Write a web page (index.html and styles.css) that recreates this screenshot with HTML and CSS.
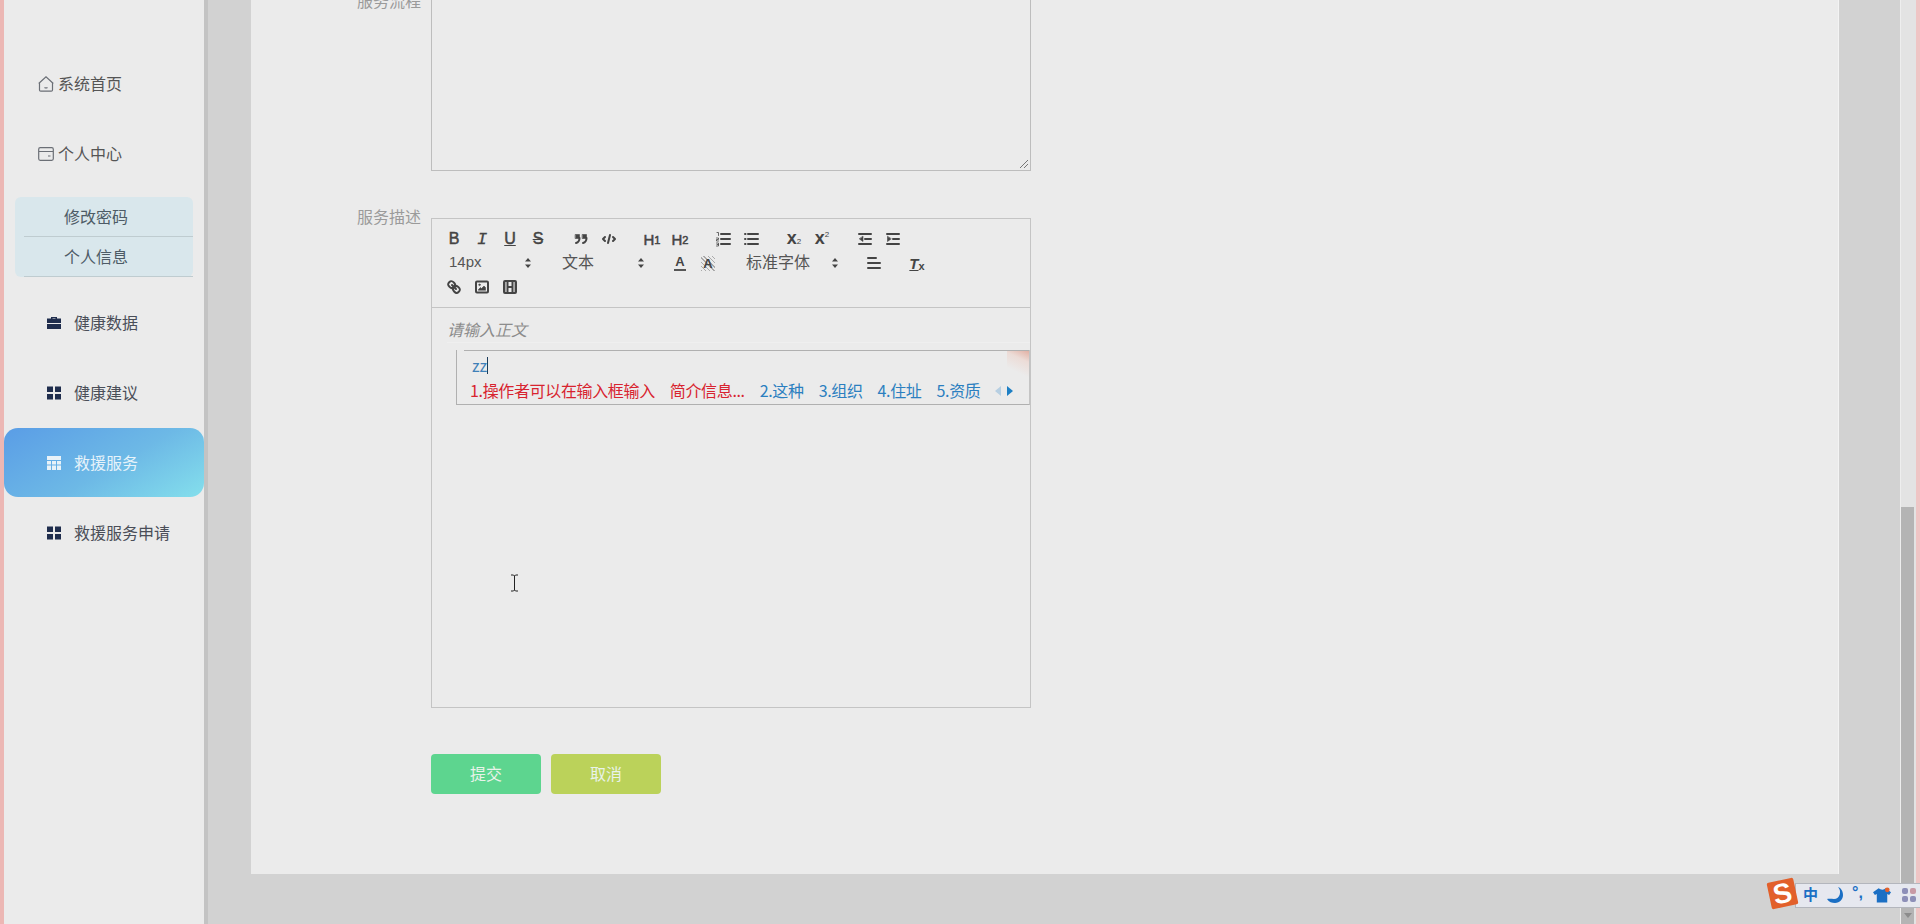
FILE: index.html
```html
<!DOCTYPE html>
<html lang="zh">
<head>
<meta charset="utf-8">
<title>救援服务</title>
<link rel="stylesheet" href="styles.css">
</head>
<body>
<div class="app">
  <div class="edge"></div>
  <aside class="sidebar">
    <a class="top-item">
      <svg class="top-icon" viewBox="0 0 16 16"><path d="M0.700 7.500 8 0.800l7.300 6.700M1.500 7v7a1.200 1.200 0 0 0 1.200 1.200h10.600a1.200 1.200 0 0 0 1.200-1.200V7"/><path d="M6.500 11.500q1.500 1 3 0"/></svg>
      <span>系统首页</span>
    </a>
    <a class="top-item">
      <svg class="top-icon" viewBox="0 0 16 16"><rect x="0.700" y="1.700" width="14.600" height="12.600" rx="1.500"/><path d="M1 5.500h14M10 10h2.500"/></svg>
      <span>个人中心</span>
    </a>
    <ul class="submenu">
      <li>修改密码</li>
      <li>个人信息</li>
    </ul>
    <a class="nav-item">
      <svg class="nav-icon" viewBox="0 0 14 14"><path d="M4 2.500V1h6v1.500h4V7H0V2.500Zm1.500 0h3V2h-3ZM0 8h14v5H0Z"/></svg>
      <span>健康数据</span>
    </a>
    <a class="nav-item">
      <svg class="nav-icon" viewBox="0 0 14 14"><rect width="6" height="5.500" y="0.500"/><rect x="8" width="6" height="5.500" y="0.500"/><rect y="8" width="6" height="5.500"/><rect x="8" y="8" width="6" height="5.500"/></svg>
      <span>健康建议</span>
    </a>
    <a class="nav-item nav-active">
      <svg class="nav-icon" viewBox="0 0 14 14"><path d="M0 0h14v4H0ZM0 5h4v3.500H0ZM5 5h4v3.500H5ZM10 5h4v3.500h-4ZM0 9.500h4V14H0ZM5 9.500h4V14H5ZM10 9.500h4V14h-4Z"/></svg>
      <span>救援服务</span>
    </a>
    <a class="nav-item">
      <svg class="nav-icon" viewBox="0 0 14 14"><rect width="6" height="5.500" y="0.500"/><rect x="8" width="6" height="5.500" y="0.500"/><rect y="8" width="6" height="5.500"/><rect x="8" y="8" width="6" height="5.500"/></svg>
      <span>救援服务申请</span>
    </a>
  </aside>
  <div class="sidebar-shade"></div>
  <main class="main">
    <div class="card">
      <div class="form">
        <div class="row row-first">
          <label class="label">服务流程</label>
          <div class="textarea">
            <svg class="grip" viewBox="0 0 10 10"><path d="M1 9 9 1M5 9l4-4"/></svg>
          </div>
        </div>
        <div class="row row-editor">
          <label class="label">服务描述</label>
          <div class="editor">
            <div class="toolbar">
              <div class="group">
                <button class="tool t-b">B</button>
                <button class="tool t-i">I</button>
                <button class="tool t-u">U</button>
                <button class="tool t-s">S</button>
              </div>
              <div class="group">
                <button class="tool"><svg class="ico" viewBox="0 0 18 18"><path class="solid" d="M3.500 4.500h4v4h-4ZM10.500 4.500h4v4h-4Z"/><path d="M7.500 8c0 4-3.500 5-3.500 5M14.500 8c0 4-3.500 5-3.500 5"/></svg></button>
                <button class="tool"><svg class="ico" viewBox="0 0 18 18"><path d="M5 7 3 9l2 2M13 7l2 2-2 2M10 5l-2 8"/></svg></button>
              </div>
              <div class="group">
                <button class="tool t-h">H<small>1</small></button>
                <button class="tool t-h">H<small>2</small></button>
              </div>
              <div class="group">
                <button class="tool"><svg class="ico" viewBox="0 0 18 18"><path d="M7 4h9M7 9h9M7 14h9"/><path class="thin" d="M3 2.500h1.500v3M2.500 8h2v1.500h-2V11h2M2.500 13h2v3h-2M3 14.500h1.500"/></svg></button>
                <button class="tool"><svg class="ico" viewBox="0 0 18 18"><path d="M6 4h10M6 9h10M6 14h10M3 4h.5M3 9h.5M3 14h.5"/></svg></button>
              </div>
              <div class="group">
                <button class="tool t-x">x<sub>2</sub></button>
                <button class="tool t-x">x<sup>2</sup></button>
              </div>
              <div class="group">
                <button class="tool"><svg class="ico" viewBox="0 0 18 18"><path d="M3 4h12M9 9h6M3 14h12"/><path class="solid" d="M7 6.500v5L3.500 9Z"/></svg></button>
                <button class="tool"><svg class="ico" viewBox="0 0 18 18"><path d="M3 4h12M9 9h6M3 14h12"/><path class="solid" d="M3.500 6.500v5L7 9Z"/></svg></button>
              </div>
              <div class="group">
                <div class="picker picker-md picker-size"><span>14px</span><svg class="updown" viewBox="0 0 8 12"><path d="M1 4.500 4 1l3 3.500ZM1 7.500 4 11l3-3.500Z"/></svg></div>
              </div>
              <div class="group">
                <div class="picker picker-md"><span>文本</span><svg class="updown" viewBox="0 0 8 12"><path d="M1 4.500 4 1l3 3.500ZM1 7.500 4 11l3-3.500Z"/></svg></div>
              </div>
              <div class="group">
                <button class="tool t-a"><span class="a-color">A</span></button>
                <button class="tool t-a"><span class="a-bg">A</span></button>
              </div>
              <div class="group">
                <div class="picker picker-lg"><span>标准字体</span><svg class="updown" viewBox="0 0 8 12"><path d="M1 4.500 4 1l3 3.500ZM1 7.500 4 11l3-3.500Z"/></svg></div>
              </div>
              <div class="group">
                <button class="tool"><svg class="ico" viewBox="0 0 18 18"><path d="M3 4h8M3 9h12M3 14h12"/></svg></button>
              </div>
              <div class="group">
                <button class="tool t-clean"><i>T</i><b>x</b></button>
              </div>
              <div class="group">
                <button class="tool"><svg class="ico" viewBox="0 0 18 18"><path d="M7 7l4 4"/><path d="M8.900 4.577a3.476 3.476 0 0 1 .36 4.679A3.476 3.476 0 0 1 4.577 8.900C3.185 7.500 2.035 6.400 4.217 4.217S7.500 3.185 8.900 4.577Z"/><path d="M13.423 9.100a3.476 3.476 0 0 0-4.679-.36 3.476 3.476 0 0 0 .36 4.679c1.392 1.392 2.500 2.542 4.679.36S14.815 10.500 13.423 9.100Z"/></svg></button>
                <button class="tool"><svg class="ico" viewBox="0 0 18 18"><rect x="3" y="3.500" width="12" height="11" rx="1"/><circle class="solid" cx="6.500" cy="6.800" r="0.800"/><path class="solid" d="M5.500 12v-.5l2-2 1 1 2.500-2.500 1.500 1.500V12Z"/></svg></button>
                <button class="tool"><svg class="ico ico-video" viewBox="0 0 18 18"><rect x="3" y="3" width="12" height="12" rx="1"/><path d="M6.500 3v12M11.500 3v12M6.500 9h5"/><path class="thin" d="M4 3v12M14 3v12"/></svg></button>
              </div>
            </div>
            <div class="editor-body">
              <p class="placeholder">请输入正文</p>
            </div>
          </div>
        </div>
        <div class="actions">
          <button class="btn btn-submit">提交</button>
          <button class="btn btn-cancel">取消</button>
        </div>
      </div>
    </div>
    <div class="main-foot"></div>
  </main>
  <div class="scrollbar"><div class="thumb"></div></div>
  <div class="edge edge-right"></div>
</div>

<div class="ime">
  <div class="ime-deco"></div>
  <div class="ime-input"><span>zz</span><i class="caret"></i></div>
  <div class="ime-list">
    <span class="cand cand-red">1.操作者可以在输入框输入</span>
    <span class="cand cand-red">简介信息...</span>
    <span class="cand">2.这种</span>
    <span class="cand">3.组织</span>
    <span class="cand">4.住址</span>
    <span class="cand">5.资质</span>
    <span class="ime-arrows"><i class="arrow-left"></i><i class="arrow-right"></i></span>
  </div>
</div>

<svg class="ibeam" viewBox="0 0 9 18"><path d="M1 1h2.500L4.500 2l1-1H8M1 17h2.500l1-1 1 1H8M4.500 2v14"/></svg>

<div class="tray">
  <div class="tray-bar">
    <span class="tray-zh">中</span>
    <svg class="tray-moon" viewBox="0 0 16 16"><path d="M11 0c4 4 2 12-4 12-2 0-5-.5-7 0 2 3 5 4 8 4 5 0 8-4 8-8 0-4-2-7-5-8Z"/></svg>
    <span class="tray-punct">°,</span>
    <svg class="tray-shirt" viewBox="0 0 20 16"><path d="M6 1 0 5l2 3 2-1v9h11V7l2 1 2-3-6-4c-1 2-5 2-7 0Z"/><circle cx="15" cy="2.500" r="2.500"/></svg>
    <div class="tray-grid"><i></i><i></i><i></i><i></i></div>
  </div>
  <div class="tray-logo"><span>S</span></div>
  <div class="tray-tri"></div>
</div>
</body>
</html>
```

FILE: styles.css
```css
* { box-sizing: border-box; }
html, body { margin: 0; height: 100%; overflow: hidden; }
body {
  font-family: "Noto Sans CJK SC", "Liberation Sans", sans-serif;
  font-size: 16px;
  background: #d2d2d2;
  color: #444;
}
a { color: inherit; text-decoration: none; }
button { font-family: inherit; border: 0; padding: 0; background: none; }

.app { display: flex; height: 924px; }
.edge { width: 4px; background: #ecb7b4; flex: none; }
.edge-right { background: #efc4c4; }

/* sidebar */
.sidebar {
  width: 200px;
  flex: none;
  background: #ebebeb;
  padding-top: 49px;
}
.sidebar-shade { width: 4px; flex: none; background: #c3c3c3; }
.top-item {
  display: flex;
  align-items: center;
  height: 70px;
  padding-left: 34px;
  gap: 4px;
  color: #555;
  line-height: 24px;
}
.top-item span { margin-top: -3px; }
.nav-item span { margin-top: -2px; }
.top-icon {
  width: 16px;
  height: 16px;
  fill: none;
  stroke: #6b6f76;
  stroke-width: 1.200;
}
.submenu {
  list-style: none;
  margin: 8px 0 11px 11px;
  padding: 0;
  width: 178px;
  height: 80px;
  background: #d9e7ec;
  border-radius: 6px;
  color: #4d5b66;
}
.submenu li {
  height: 40px;
  line-height: 38px;
  margin-left: 9px;
  padding-left: 40px;
  border-bottom: 1px solid #bfccd0;
}
.nav-item {
  display: flex;
  align-items: center;
  height: 70px;
  padding-left: 43px;
  gap: 13px;
  color: #4a4e58;
}
.nav-icon { width: 14px; height: 14px; fill: #1f2d4d; flex: none; }
.nav-active {
  color: #e6f3fa;
  border-radius: 14px;
  height: 69px;
  margin-bottom: 1px;
  background: linear-gradient(150deg, #5a9de6 0%, #6db9e6 55%, #84dfec 100%);
}
.nav-active .nav-icon { fill: #e8f2f8; }

/* main */
.main {
  flex: 1;
  min-width: 0;
  display: flex;
  flex-direction: column;
  padding-left: 43px;
  padding-right: 61px;
  overflow: hidden;
}
.card {
  height: 874px;
  background: #ebebeb;
  border-right: 1px solid #f3f3f3;
  flex: none;
}
.form { padding-left: 106px; }
.row { display: flex; }
.label {
  width: 64px;
  margin-right: 10px;
  color: #9a9a9a;
  line-height: 24px;
  text-align: right;
  flex: none;
  white-space: nowrap;
}
.row-first { margin-top: -12px; height: 183px; }
.textarea {
  position: relative;
  width: 600px;
  height: 183px;
  border: 1px solid #bdbdbd;
  border-top: 0;
}
.grip {
  position: absolute;
  right: 1px;
  bottom: 1px;
  width: 10px;
  height: 10px;
  fill: none;
  stroke: #777;
  stroke-width: 1;
}
.row-editor { margin-top: 47px; }
.row-editor .label { margin-top: -14px; }
.editor {
  width: 600px;
  height: 490px;
  border: 1px solid #c4c4c4;
  display: flex;
  flex-direction: column;
}
.toolbar {
  display: flex;
  flex-wrap: wrap;
  align-content: flex-start;
  padding: 8px 8px;
  height: 89px;
  border-bottom: 1px solid #c4c4c4;
}
.group { display: flex; margin-right: 15px; height: 24px; }
.tool {
  width: 28px;
  height: 24px;
  display: flex;
  align-items: center;
  justify-content: center;
  color: #444;
  font-family: "Liberation Sans", sans-serif;
  line-height: 1;
}
.ico {
  width: 18px;
  height: 18px;
  fill: none;
  stroke: #444;
  stroke-width: 2;
  stroke-linecap: round;
  stroke-linejoin: round;
}
.ico .solid { fill: #444; stroke-width: 0.600; }
.ico .thin { stroke-width: 0.800; }
.ico-video { stroke-linecap: butt; }
.t-b, .t-u, .t-s { font-size: 16px; -webkit-text-stroke: 0.500px #444; }
.t-u { text-decoration: underline; }
.t-s { text-decoration: line-through; }
.t-i { font-family: "Liberation Mono", monospace; font-size: 17px; font-style: italic; -webkit-text-stroke: 0.300px #444; }
.t-h { font-size: 15px; -webkit-text-stroke: 0.500px #444; }
.t-h small { font-size: 11px; margin-top: 3px; }
.t-x { font-size: 18px; font-weight: 700; padding-bottom: 3px; }
.t-x sub, .t-x sup { font-size: 8px; font-weight: 400; vertical-align: baseline; }
.t-x sub { margin-top: 8px; }
.t-x sup { margin-top: -6px; }
.a-color {
  font-size: 13px;
  font-weight: 700;
  border-bottom: 2px solid #555;
  padding: 0 1px 1px;
}
.a-bg {
  font-size: 13px;
  font-weight: 700;
  padding: 1px 2px;
  background: repeating-linear-gradient(45deg, #aaa 0 1px, transparent 1px 3px);
}
.t-clean i { font-size: 15px; font-weight: 700; text-decoration: underline; }
.t-clean b { font-size: 11px; margin-top: 6px; }
.picker {
  display: flex;
  align-items: center;
  height: 24px;
  padding-left: 9px;
  color: #555;
  font-family: "Liberation Sans", "Noto Sans CJK SC", sans-serif;
  font-size: 16px;
}
.picker-size { font-size: 15px; }
.picker-md { width: 98px; }
.picker-lg { width: 108px; }
.picker span { flex: 1; margin-top: -4px; }
.updown { width: 8px; height: 12px; fill: #444; margin-right: 6px; flex: none; }
.editor-body { flex: 1; padding: 10px 15px; }
.placeholder {
  margin: 0;
  color: #8c8c8c;
  font-style: italic;
  line-height: 22px;
  border-bottom: 1px solid #efefef;
  margin-right: -15px;
  padding-bottom: 2px;
}
.actions { display: flex; gap: 10px; margin: 46px 0 0 74px; }
.btn {
  width: 110px;
  height: 40px;
  border-radius: 4px;
  font-size: 16px;
  color: #e9f3ea;
  padding-bottom: 3px;
}
.btn-submit { background: #5dd58f; }
.btn-cancel { background: #bbd25a; }
.main-foot { flex: 1; }

/* scrollbar */
.scrollbar {
  width: 16px;
  flex: none;
  background: #e3e3e3;
  padding: 507px 2px 0 0;
  border-left: 1px solid #eee;
}
.thumb { height: 100%; background: #b4b4b4; }

/* IME popup over the editor */
.ime {
  position: absolute;
  left: 456px;
  top: 350px;
  width: 574px;
  height: 55px;
  background: #ebebeb;
  border-left: 1px solid #b0b0b0;
  border-bottom: 1px solid #b0b0b0;
  border-right: 1px solid #c4c4c4;
  padding: 0 0 0 13px;
}
.ime::before {
  content: "";
  position: absolute;
  left: 7px;
  right: 0;
  top: 0;
  height: 1px;
  background: #b0b0b0;
}
.ime-deco {
  position: absolute;
  right: 0;
  top: 1px;
  width: 22px;
  height: 28px;
  background: linear-gradient(205deg, #e2b0a4 0%, #ecdcd7 30%, #ebebeb 70%);
}
.ime-input {
  position: relative;
  display: flex;
  align-items: center;
  height: 28px;
  margin-left: 2px;
  padding-top: 2px;
  color: #3f80b8;
  font-size: 16px;
}
.caret { width: 1px; height: 17px; background: #1c3d5c; }
.ime-list {
  position: relative;
  display: flex;
  align-items: center;
  height: 24px;
  gap: 15px;
  color: #2b7fc0;
  font-size: 16px;
  white-space: nowrap;
}
.cand { letter-spacing: -0.350px; }
.cand-red { color: #d8232f; }
.ime-arrows { display: flex; gap: 6px; margin-top: 2px; }
.arrow-left, .arrow-right { width: 0; height: 0; border-style: solid; border-width: 5px 0; border-color: transparent; }
.arrow-left { border-right: 6px solid #b7cfe2; }
.arrow-right { border-left: 6px solid #1d7fc4; }

.ibeam {
  position: absolute;
  left: 510px;
  top: 574px;
  width: 9px;
  height: 18px;
  fill: none;
  stroke: #222;
  stroke-width: 1;
}

/* input-method tray */
.tray { position: absolute; left: 1767px; top: 878px; width: 153px; height: 46px; }
.tray-logo {
  position: absolute;
  left: 2px;
  top: 2px;
  width: 27px;
  height: 27px;
  background: #e2602b;
  transform: rotate(-12deg);
  border-radius: 2px;
  display: flex;
  align-items: center;
  justify-content: center;
  color: #fff;
  font: 700 28px/27px "Liberation Sans", sans-serif;
}
.tray-bar {
  position: absolute;
  left: 28px;
  top: 5px;
  right: 0;
  height: 25px;
  background: #e6e8ef;
  border: 1px solid #b3b6bd;
  border-right: 0;
  color: #1b6fc4;
}
.tray-zh {
  position: absolute;
  left: 7px;
  top: -2px;
  font-size: 15px;
  font-weight: 700;
  line-height: 24px;
}
.tray-moon { position: absolute; left: 31px; top: 3px; width: 16px; height: 16px; fill: #1b6fc4; }
.tray-punct {
  position: absolute;
  left: 56px;
  top: -3px;
  font: 700 16px/24px "Liberation Sans", sans-serif;
}
.tray-shirt { position: absolute; left: 77px; top: 3px; width: 19px; height: 16px; fill: #1b6fc4; }
.tray-shirt circle { fill: #e2602b; }
.tray-grid {
  position: absolute;
  left: 106px;
  top: 4px;
  display: grid;
  grid-template-columns: 6px 6px;
  gap: 2px;
}
.tray-grid i { width: 6px; height: 6px; border-radius: 2px; background: #8d8fb8; }
.tray-grid i:nth-child(2) { background: #c89aa6; }
.tray-tri {
  position: absolute;
  left: 137px;
  top: 35px;
  width: 0;
  height: 0;
  border-style: solid;
  border-width: 5px 4px 0;
  border-color: #8c8c8c transparent transparent;
}
```
